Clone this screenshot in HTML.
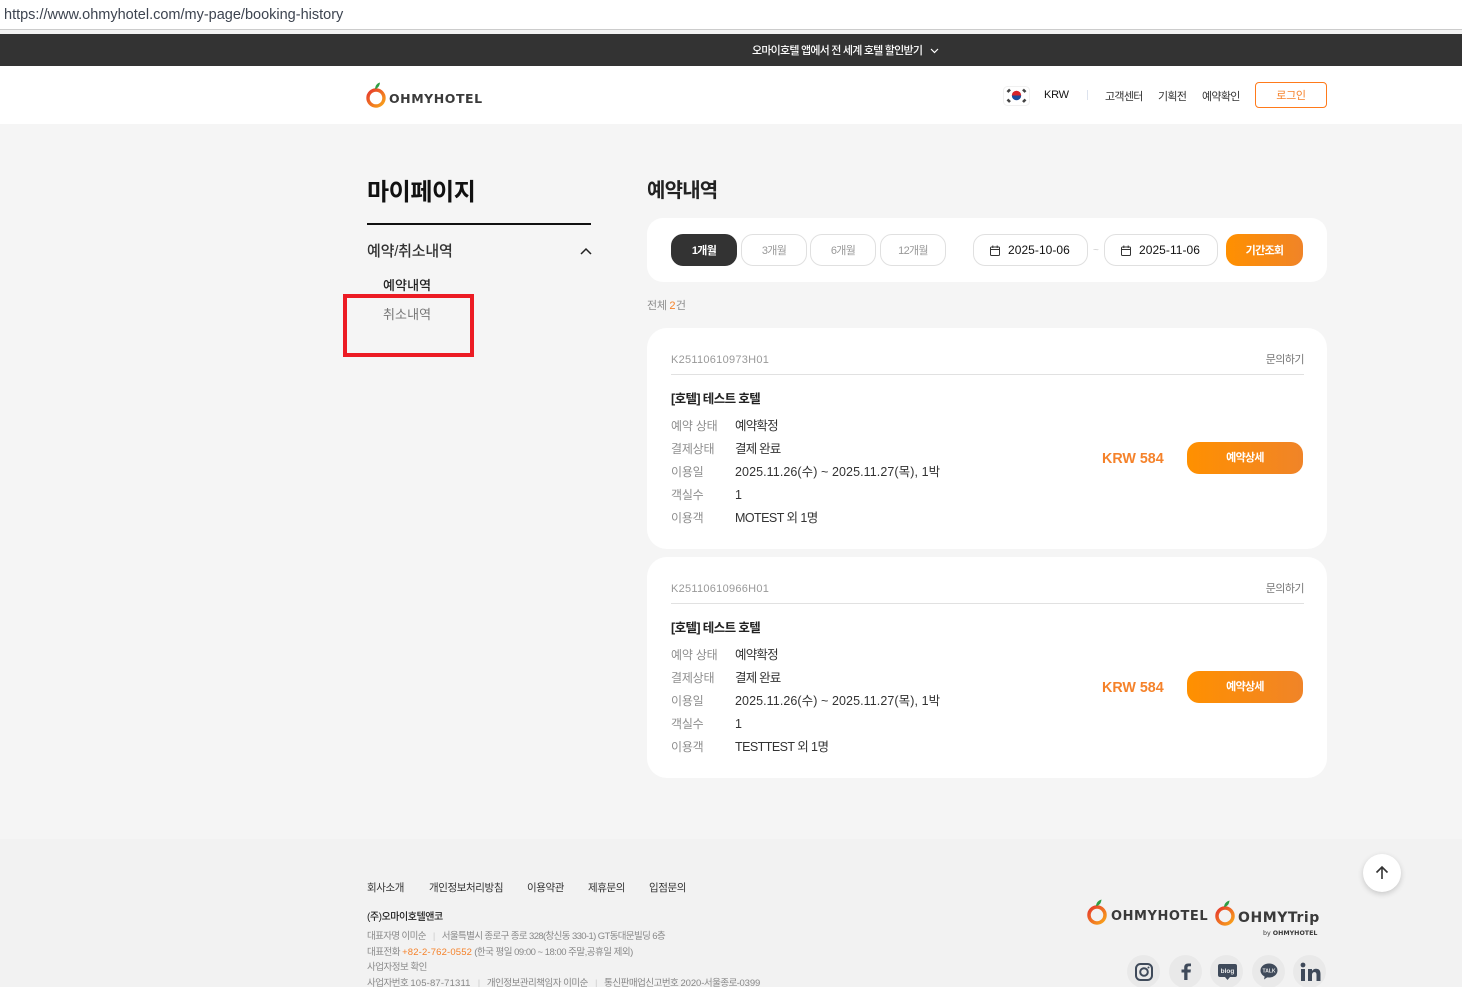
<!DOCTYPE html>
<html lang="ko">
<head>
<meta charset="utf-8">
<title>OHMYHOTEL</title>
<style>
html,body{margin:0;padding:0;width:1462px;height:987px;overflow:hidden;background:#f5f5f5}
body{position:relative;font-family:"Liberation Sans","Noto Sans CJK KR",sans-serif;color:#222}
.a{position:absolute}
.t{position:absolute;white-space:nowrap;line-height:20px;height:20px}
.card{position:absolute;left:647px;width:680px;height:221px;background:#fff;border-radius:20px}
.pill{position:absolute;top:234px;height:30px;border:1px solid #e0e0e0;border-radius:12px;background:#fff;text-align:center;line-height:32px;font-size:11px;color:#999;letter-spacing:-.7px}
.lbl{position:absolute;left:24px;font-size:12px;line-height:20px;color:#8e8e8e;white-space:nowrap;letter-spacing:-.2px}
.val{position:absolute;left:88px;font-size:12.5px;line-height:20px;color:#333;white-space:nowrap}
.ko{letter-spacing:-.8px}
.btn{position:absolute;background:linear-gradient(90deg,#ff9000,#f08428);color:#fff;font-weight:700;text-align:center;letter-spacing:-.7px}
.soc{position:absolute;top:955px;width:33px;height:33px;border-radius:50%;background:#e9e9e9}
.soc svg{position:absolute;left:0;top:0}
.logo{font-family:"DejaVu Sans",sans-serif;font-weight:700;color:#3a3a3a;white-space:nowrap;position:absolute}
</style>
</head>
<body>
<!-- address bar -->
<div class="a" style="left:0;top:0;width:1462px;height:29px;background:#fff;border-bottom:1px solid #ccc"></div>
<div class="a" style="left:0;top:30px;width:1462px;height:4px;background:#f3f3f3"></div>
<div class="t" style="left:4px;top:5px;font-size:14.5px;color:#3d4450">https://www.ohmyhotel.com/my-page/booking-history</div>

<!-- promo bar -->
<div class="a" style="left:0;top:34px;width:1462px;height:32px;background:#333"></div>
<div class="t" style="left:752px;top:41px;font-size:11px;color:#fff;font-weight:500;letter-spacing:-.78px">오마이호텔 앱에서 전 세계 호텔 할인받기</div>
<svg class="a" style="left:929px;top:46px" width="11" height="10" viewBox="0 0 11 10"><path d="M2 3l3.5 3.5L9 3" fill="none" stroke="#fff" stroke-width="1.2"/></svg>

<!-- header -->
<div class="a" style="left:0;top:66px;width:1462px;height:58px;background:#fff"></div>
<svg class="a" style="left:365px;top:80px" width="24" height="28" viewBox="0 0 24 28">
<defs><linearGradient id="g" x1="0" y1="0" x2="1" y2="1"><stop offset="0" stop-color="#e5392d"/><stop offset="1" stop-color="#f9a51a"/></linearGradient></defs>
<circle cx="11" cy="18" r="8" fill="none" stroke="url(#g)" stroke-width="3.4"/>
<path d="M10 9c.2-3 1.8-5.800 5-6.500-.3 3-2 6-5 6.500z" fill="#2f9e44"/></svg>
<div class="logo" style="left:389px;top:91px;font-size:12.5px;line-height:16px;letter-spacing:.55px">OHMYHOTEL</div>

<svg class="a" style="left:1003px;top:86px" width="27" height="20" viewBox="0 0 27 20">
<rect x="0.500" y="0.500" width="26" height="19" rx="4" fill="#fff" stroke="#f0f0f0"/>
<path d="M8.800 9.500a4.700 4.700 0 0 1 9.400 0z" fill="#d8232a"/><path d="M8.800 9.500a4.700 4.700 0 0 0 9.400 0z" fill="#1c4b9c"/>
<g stroke="#444" stroke-width="2.600"><path d="M4.500 6l2.500-2.500M20 3.500L22.500 6M4.500 13.500L7 16M20 16l2.500-2.500"/></g></svg>
<div class="t" style="left:1044px;top:85px;font-size:11px;color:#111;letter-spacing:-.2px">KRW</div>
<div class="a" style="left:1087px;top:90px;width:1px;height:10px;background:#dde3ee"></div>
<div class="t" style="left:1105px;top:87px;font-size:11px;color:#333;letter-spacing:-.7px">고객센터</div>
<div class="t" style="left:1158px;top:87px;font-size:11px;color:#333;letter-spacing:-.7px">기획전</div>
<div class="t" style="left:1202px;top:87px;font-size:11px;color:#333;letter-spacing:-.7px">예약확인</div>
<div class="a" style="left:1255px;top:82px;width:70px;height:24px;border:1px solid #ff7a1a;border-radius:4px;background:#fff;text-align:center;line-height:26px;font-size:11px;color:#f5822a;letter-spacing:-.3px">로그인</div>

<!-- sidebar -->
<div class="t" style="left:367px;top:178px;font-size:24px;line-height:30px;height:30px;font-weight:700;color:#111;letter-spacing:-.4px">마이페이지</div>
<div class="a" style="left:367px;top:223px;width:224px;height:2px;background:#111"></div>
<div class="t" style="left:367px;top:242px;font-size:15px;font-weight:500;color:#333;letter-spacing:-.2px">예약/취소내역</div>
<svg class="a" style="left:579px;top:245px" width="14" height="12" viewBox="0 0 14 12"><path d="M2 9l5-5 5 5" fill="none" stroke="#222" stroke-width="1.500"/></svg>
<div class="t" style="left:383px;top:276px;font-size:13px;font-weight:500;color:#222;letter-spacing:.1px">예약내역</div>
<div class="t" style="left:383px;top:305px;font-size:13px;color:#777;letter-spacing:.1px">취소내역</div>
<div class="a" style="left:343px;top:294px;width:123px;height:55px;border:4px solid #ec1c24"></div>

<!-- main -->
<div class="t" style="left:647px;top:177px;font-size:20px;line-height:28px;height:28px;font-weight:700;color:#222;letter-spacing:-.8px">예약내역</div>
<div class="a" style="left:647px;top:218px;width:680px;height:64px;background:#fff;border-radius:16px"></div>
<div class="pill" style="left:671px;width:64px;background:#333;border-color:#333;color:#fff;font-weight:700">1개월</div>
<div class="pill" style="left:741px;width:64px">3개월</div>
<div class="pill" style="left:810px;width:64px">6개월</div>
<div class="pill" style="left:880px;width:64px">12개월</div>
<div class="pill" style="left:973px;width:113px"></div>
<div class="pill" style="left:1104px;width:112px"></div>
<svg class="a" style="left:989px;top:244px" width="12" height="13" viewBox="0 0 12 13"><path d="M2.500 3h7a1 1 0 0 1 1 1v6.500a1 1 0 0 1-1 1h-7a1 1 0 0 1-1-1V4a1 1 0 0 1 1-1zM1.500 5.500h9M3.800 1.500V4M8.200 1.500V4" fill="none" stroke="#333" stroke-width="1"/></svg>
<svg class="a" style="left:1120px;top:244px" width="12" height="13" viewBox="0 0 12 13"><path d="M2.500 3h7a1 1 0 0 1 1 1v6.500a1 1 0 0 1-1 1h-7a1 1 0 0 1-1-1V4a1 1 0 0 1 1-1zM1.500 5.500h9M3.800 1.500V4M8.200 1.500V4" fill="none" stroke="#333" stroke-width="1"/></svg>
<div class="t" style="left:1008px;top:240px;font-size:12px;color:#111;letter-spacing:.05px">2025-10-06</div>
<div class="t" style="left:1139px;top:240px;font-size:12px;color:#111;letter-spacing:.05px">2025-11-06</div>
<div class="t" style="left:1093px;top:241px;font-size:10px;color:#ccc">~</div>
<div class="btn" style="left:1226px;top:234px;width:77px;height:32px;border-radius:12px;line-height:34px;font-size:11px">기간조회</div>
<div class="t" style="left:647px;top:296px;font-size:11px;color:#8e8e8e;letter-spacing:-.3px">전체 <span style="color:#f5822a;letter-spacing:.3px">2</span>건</div>

<!-- card 1 -->
<div class="card" style="top:328px">
<div class="t" style="left:24px;top:22px;font-size:11px;color:#999;letter-spacing:.28px">K25110610973H01</div>
<div class="t" style="right:23px;top:22px;font-size:11px;color:#777;letter-spacing:-.55px">문의하기</div>
<div class="a" style="left:24px;top:46px;width:633px;height:1px;background:#e1e1e1"></div>
<div class="t" style="left:24px;top:61px;font-size:12.5px;font-weight:700;color:#222;letter-spacing:-.6px">[호텔] 테스트 호텔</div>
<div class="lbl" style="top:88px">예약 상태</div><div class="val ko" style="top:88px">예약확정</div>
<div class="lbl" style="top:111px">결제상태</div><div class="val ko" style="top:111px">결제 완료</div>
<div class="lbl" style="top:134px">이용일</div><div class="val" style="top:134px;letter-spacing:.08px">2025.11.26(수) ~ 2025.11.27(목), 1박</div>
<div class="lbl" style="top:157px">객실수</div><div class="val" style="top:157px">1</div>
<div class="lbl" style="top:180px">이용객</div><div class="val" style="top:180px;letter-spacing:-.55px">MOTEST 외 1명</div>
<div class="t" style="left:455px;top:121px;font-size:14.3px;font-weight:700;color:#f5822a">KRW 584</div>
<div class="btn" style="left:540px;top:114px;width:116px;height:32px;border-radius:12px;line-height:32px;font-size:11px">예약상세</div>
</div>

<!-- card 2 -->
<div class="card" style="top:557px">
<div class="t" style="left:24px;top:22px;font-size:11px;color:#999;letter-spacing:.28px">K25110610966H01</div>
<div class="t" style="right:23px;top:22px;font-size:11px;color:#777;letter-spacing:-.55px">문의하기</div>
<div class="a" style="left:24px;top:46px;width:633px;height:1px;background:#e1e1e1"></div>
<div class="t" style="left:24px;top:61px;font-size:12.5px;font-weight:700;color:#222;letter-spacing:-.6px">[호텔] 테스트 호텔</div>
<div class="lbl" style="top:88px">예약 상태</div><div class="val ko" style="top:88px">예약확정</div>
<div class="lbl" style="top:111px">결제상태</div><div class="val ko" style="top:111px">결제 완료</div>
<div class="lbl" style="top:134px">이용일</div><div class="val" style="top:134px;letter-spacing:.08px">2025.11.26(수) ~ 2025.11.27(목), 1박</div>
<div class="lbl" style="top:157px">객실수</div><div class="val" style="top:157px">1</div>
<div class="lbl" style="top:180px">이용객</div><div class="val" style="top:180px;letter-spacing:-.55px">TESTTEST 외 1명</div>
<div class="t" style="left:455px;top:121px;font-size:14.3px;font-weight:700;color:#f5822a">KRW 584</div>
<div class="btn" style="left:540px;top:114px;width:116px;height:32px;border-radius:12px;line-height:32px;font-size:11px">예약상세</div>
</div>

<!-- footer -->
<div class="a" style="left:0;top:839px;width:1462px;height:148px;background:#f2f2f2"></div>
<div class="t" style="left:367px;top:878px;font-size:10.500px;color:#333;letter-spacing:-.4px">회사소개</div>
<div class="t" style="left:429px;top:878px;font-size:10.500px;color:#333;letter-spacing:-.4px">개인정보처리방침</div>
<div class="t" style="left:527px;top:878px;font-size:10.500px;color:#333;letter-spacing:-.4px">이용약관</div>
<div class="t" style="left:588px;top:878px;font-size:10.500px;color:#333;letter-spacing:-.4px">제휴문의</div>
<div class="t" style="left:649px;top:878px;font-size:10.500px;color:#333;letter-spacing:-.4px">입점문의</div>
<div class="t" style="left:367px;top:908px;font-size:10px;font-weight:500;color:#222;letter-spacing:-.45px">(주)오마이호텔앤코</div>
<div class="t" style="left:367px;top:927px;font-size:9.500px;color:#888;letter-spacing:-.62px">대표자명 이미순 <span style="color:#ccc;margin:0 5px">|</span> 서울특별시 종로구 종로 328(창신동 330-1) GT동대문빌딩 6층</div>
<div class="t" style="left:367px;top:943px;font-size:9.500px;color:#888;letter-spacing:-.5px">대표전화 <span style="color:#f5822a;letter-spacing:.15px">+82-2-762-0552</span> (한국 평일 09:00 ~ 18:00 주말,공휴일 제외)</div>
<div class="t" style="left:367px;top:958px;font-size:9.500px;color:#888;letter-spacing:-.5px">사업자정보 확인</div>
<div class="t" style="left:367px;top:974px;font-size:9.500px;color:#888;letter-spacing:-.5px">사업자번호 <span style="letter-spacing:.15px">105-87-71311</span> <span style="color:#ccc;margin:0 5px">|</span> 개인정보관리책임자 이미순 <span style="color:#ccc;margin:0 5px">|</span> 통신판매업신고번호 <span style="letter-spacing:-.1px">2020</span>-서울종로-<span style="letter-spacing:-.1px">0399</span></div>

<!-- footer logos -->
<svg class="a" style="left:1085px;top:897px" width="24" height="30" viewBox="0 0 24 30"><circle cx="12" cy="18" r="8" fill="none" stroke="url(#g)" stroke-width="3.500"/><path d="M11 9c.2-3 2-5.500 5.500-6.500-.3 3.500-2 6-5.500 6.500z" fill="#2f9e44"/></svg>
<div class="logo" style="left:1111px;top:908px;font-size:13px;line-height:18px;letter-spacing:.55px">OHMYHOTEL</div>
<svg class="a" style="left:1213px;top:898px" width="24" height="30" viewBox="0 0 24 30"><circle cx="12" cy="18" r="8" fill="none" stroke="url(#g)" stroke-width="3.500"/><path d="M11 9c.2-3 2-5.500 5.500-6.500-.3 3.500-2 6-5.500 6.500z" fill="#2f9e44"/></svg>
<div class="logo" style="left:1238px;top:909px;font-size:14px;line-height:18px;letter-spacing:.55px">OHMYTrip</div>
<div class="logo" style="left:1263px;top:928px;font-size:6.300px;line-height:12px;font-weight:400">by <b>OHMYHOTEL</b></div>

<!-- back to top -->
<div class="a" style="left:1363px;top:854px;width:38px;height:38px;border-radius:50%;background:#fff;box-shadow:0 2px 6px rgba(0,0,0,.18)"></div>
<svg class="a" style="left:1373px;top:864px" width="18" height="18" viewBox="0 0 18 18"><path d="M9 15V3M3.500 8.500L9 3l5.500 5.500" fill="none" stroke="#333" stroke-width="1.600"/></svg>

<!-- social -->
<div class="soc" style="left:1127px"><svg width="33" height="33" viewBox="0 0 33 33"><rect x="9" y="9" width="16" height="16" rx="4.500" fill="none" stroke="#3f4a5a" stroke-width="2"/><circle cx="17" cy="17" r="3.800" fill="none" stroke="#3f4a5a" stroke-width="2"/><circle cx="21.500" cy="12.500" r="1" fill="#3f4a5a"/></svg></div>
<div class="soc" style="left:1169px"><svg width="33" height="33" viewBox="0 0 33 33"><path d="M18.500 25v-7.500h3l.4-3h-3.400v-1.800c0-1 .4-1.500 1.500-1.500h2V8.500h-2.800c-2.700 0-4 1.600-4 4v2h-2.700v3h2.700V25z" fill="#3f4a5a"/></svg></div>
<div class="soc" style="left:1210px"><svg width="33" height="33" viewBox="0 0 33 33"><path d="M10 9h15a2 2 0 0 1 2 2v9a2 2 0 0 1-2 2h-5l-2.500 3-2.500-3h-5a2 2 0 0 1-2-2v-9a2 2 0 0 1 2-2z" fill="#3f4a5a"/><text x="17.500" y="18" font-size="6.500" font-weight="700" fill="#e9e9e9" text-anchor="middle" font-family="Liberation Sans,sans-serif">blog</text></svg></div>
<div class="soc" style="left:1252px"><svg width="33" height="33" viewBox="0 0 33 33"><ellipse cx="17" cy="15.500" rx="8.500" ry="7" fill="#3f4a5a"/><path d="M13 20l-1 4.500 4.500-3z" fill="#3f4a5a"/><text x="17" y="17.500" font-size="5" font-weight="700" fill="#e9e9e9" text-anchor="middle" font-family="Liberation Sans,sans-serif">TALK</text></svg></div>
<div class="soc" style="left:1293px"><svg width="33" height="33" viewBox="0 0 33 33"><rect x="8" y="14" width="4" height="12" fill="#3f4a5a"/><circle cx="10" cy="10" r="2.400" fill="#3f4a5a"/><path d="M15 14h4v2c.8-1.400 2.200-2.300 4-2.300 3.200 0 4.500 2 4.500 5.300v7h-4v-6.300c0-1.700-.6-2.600-2-2.600s-2.500 1-2.500 2.800V26h-4z" fill="#3f4a5a"/></svg></div>
</body>
</html>
